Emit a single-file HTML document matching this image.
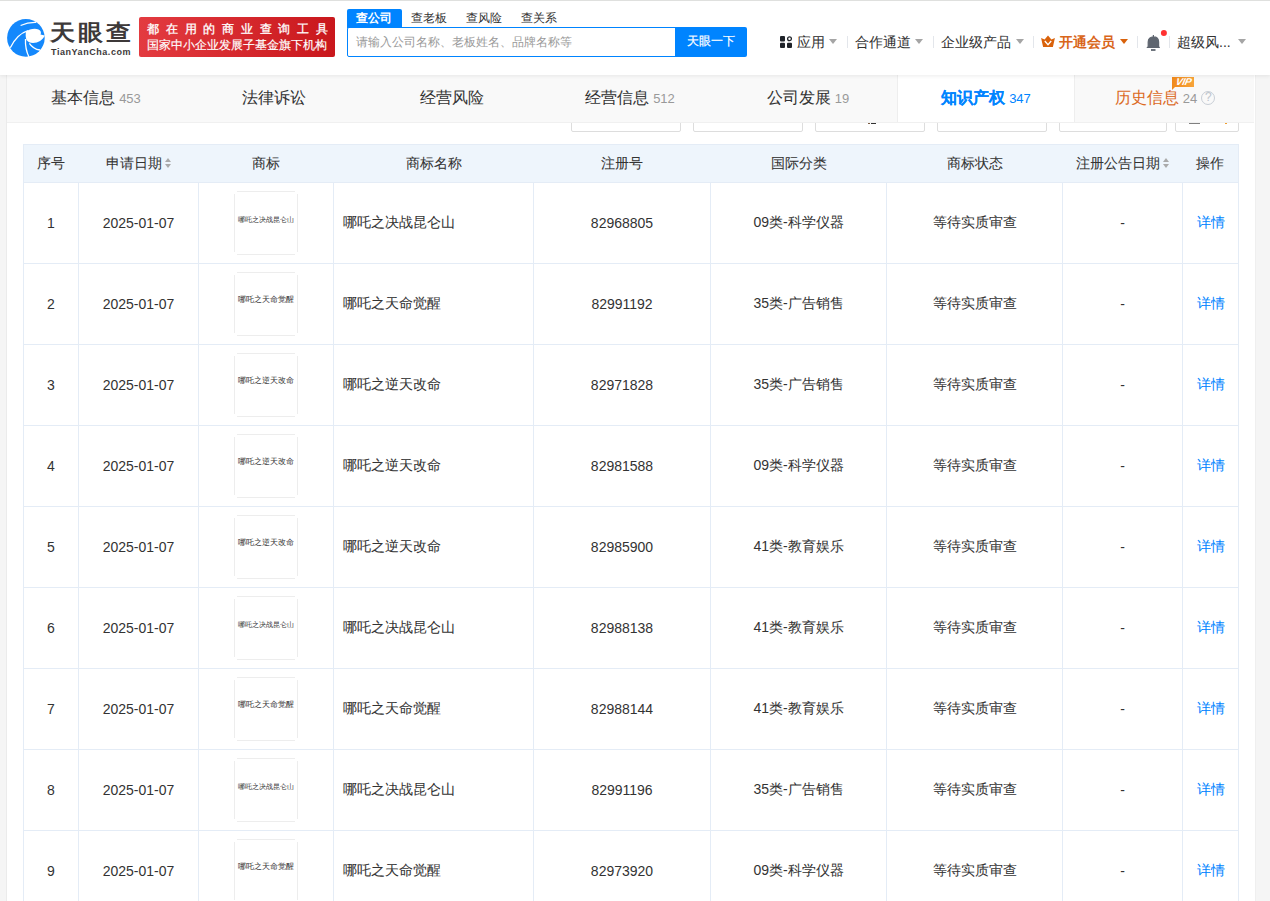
<!DOCTYPE html>
<html><head><meta charset="utf-8">
<style>
*{box-sizing:border-box;margin:0;padding:0}
html,body{width:1270px;height:901px;overflow:hidden;background:#f5f5f5;font-family:"Liberation Sans",sans-serif;color:#333}
.topline{position:absolute;left:0;top:0;width:1270px;height:1px;background:#dfe0de;z-index:10}
.header{position:absolute;left:0;top:0;width:1270px;height:75px;background:#fff;z-index:5;box-shadow:0 1px 4px rgba(0,0,0,.08)}
.abs{position:absolute}
.car{position:absolute;top:39px;width:0;height:0;border-left:4px solid transparent;border-right:4px solid transparent;border-top:5px solid #a5a5a5}
.sep{position:absolute;top:36px;width:1px;height:12px;background:#e3e6eb}
.container{position:absolute;left:6px;top:75px;width:1250px;height:826px;background:#fff;border-left:1px solid #ebebeb;border-right:1px solid #efefef}
.tabbar{position:absolute;left:7px;top:75px;width:1247px;height:48px;background:#f9f9f9;z-index:4;border-bottom:1px solid #f0f0f0}
.tab{position:absolute;top:0;height:47px;line-height:45px;text-align:center;font-size:16px;color:#333;white-space:nowrap;-webkit-text-stroke:0.05px currentColor}
.tab .n{font-size:13px;color:#999;margin-left:4px;-webkit-text-stroke:0}
.tab.active{background:#fff;border-left:1px solid #eee;border-right:1px solid #eee;color:#0084ff;font-weight:bold}
.tab.active .n{color:#0084ff;font-weight:normal}
.q{display:inline-block;width:14px;height:14px;border:1.5px solid #c8ced6;border-radius:50%;font-style:normal;font-size:12px;line-height:11px;color:#c0c6ce;text-align:center;vertical-align:middle;margin-left:4px;position:relative;top:-1px}
.vip{position:absolute;left:1165px;top:2px;width:22px;height:10px;background:linear-gradient(90deg,#f08a1c,#f7a43a);color:#fff;font-size:10px;font-weight:bold;font-style:italic;line-height:10px;text-align:center;letter-spacing:-0.3px}
.vip b{display:inline-block;transform:skewX(-12deg);margin-left:2px}
.vip:after{content:"";position:absolute;left:0;top:10px;border-top:3px solid #f08a1c;border-right:3px solid transparent}
.fbox{position:absolute;top:100px;height:32px;border:1px solid #ddd;border-radius:2px;background:#fff}
table{position:absolute;left:23px;top:144px;border-collapse:collapse;table-layout:fixed;font-size:14px;color:#333}
th{background:#eef5fc;height:38px;font-weight:normal;border-top:1px solid #e4ecf6;border-bottom:1px solid #e4ecf6;text-align:center;white-space:nowrap}
th:first-child{border-left:1px solid #e4ecf6}
th:last-child{border-right:1px solid #e4ecf6}
td{height:81px;border:1px solid #e4ecf6;text-align:center;white-space:nowrap}
.c{-webkit-text-stroke:0.05px currentColor}
td.l{text-align:left;padding-left:9px}
td a{color:#0084ff;text-decoration:none}
.tm{display:inline-block;width:64px;height:64px;vertical-align:middle;position:relative;font-family:"Liberation Serif",serif;background:linear-gradient(#ededed,#ededed) 3px 0/58px 1px no-repeat,linear-gradient(#ededed,#ededed) 3px 63px/58px 1px no-repeat,linear-gradient(#ededed,#ededed) 0 3px/1px 58px no-repeat,linear-gradient(#ededed,#ededed) 63px 3px/1px 58px no-repeat}
.tm span{position:absolute;left:0;right:0;top:25px;font-size:6.8px;text-align:center;color:#333;line-height:8px}
.tm span.b{top:23px;font-size:8px;line-height:9px}
.sort{display:inline-block;width:7px;height:10px;position:relative;vertical-align:middle;margin-left:3px;top:-1px}
.sort:before{content:"";position:absolute;left:0;top:0;border-left:3.5px solid transparent;border-right:3.5px solid transparent;border-bottom:4px solid #aaa}
.sort:after{content:"";position:absolute;left:0;top:6px;border-left:3.5px solid transparent;border-right:3.5px solid transparent;border-top:4px solid #aaa}
</style></head><body>
<div class="topline"></div>
<div class="header">
  <!-- logo -->
  <svg class="abs" style="left:4px;top:16px" width="44" height="44" viewBox="0 0 44 44"><circle cx="21.9" cy="21.9" r="18.8" fill="#1488fc"/><path d="M22,16 C25,13 31,12 34.5,13.5 C37,14.5 37.5,17 36.5,18.5 L40.8,19.5 C39,24 34,27 29,27 C26,27 24,26 22.5,24 C21.5,21 21.5,18 22,16 Z" fill="#fff"/><g fill="none" stroke="#fff" stroke-width="1.3"><path d="M6.3,31.7 Q13,18 24,14.6"/><path d="M21.5,23 Q21,33 25,41"/><path d="M25.4,27.3 Q29,33 36,34"/><path d="M16.6,9.5 Q24,6 32.2,6.3"/></g></svg>
  <div class="abs" style="left:50px;top:18px;font-size:25px;font-weight:bold;color:#3d3939;letter-spacing:3px;transform:scaleY(0.88);transform-origin:0 4px">天眼查</div>
  <div class="abs" style="left:51px;top:47px;font-size:9px;font-weight:bold;color:#3d3939;letter-spacing:0.55px">TianYanCha.com</div>
  <!-- banner -->
  <div class="abs" style="left:139px;top:17px;width:196px;height:40px;border-radius:2px;background:linear-gradient(90deg,#e33b40,#c9171c)"></div>
  <div class="abs" style="left:147px;top:21px;font-size:12px;color:#fff;letter-spacing:6.75px;line-height:16px;-webkit-text-stroke:0.3px #fff">都在用的商业查询工具</div>
  <div class="abs" style="left:147px;top:37px;font-size:12px;color:#fff;line-height:16px;-webkit-text-stroke:0.15px #fff">国家中小企业发展子基金旗下机构</div>
  <!-- search -->
  <div class="abs" style="left:347px;top:9px;width:55px;height:19px;background:#0084ff;border-radius:2px 2px 0 0"></div>
  <div class="abs" style="left:356px;top:9px;font-size:12px;line-height:19px;color:#fff;font-weight:bold">查公司</div>
  <div class="abs" style="left:411px;top:9px;font-size:12px;line-height:19px;color:#333">查老板</div>
  <div class="abs" style="left:466px;top:9px;font-size:12px;line-height:19px;color:#333">查风险</div>
  <div class="abs" style="left:521px;top:9px;font-size:12px;line-height:19px;color:#333">查关系</div>
  <div class="abs" style="left:347px;top:27px;width:330px;height:30px;border:1px solid #0084ff;border-radius:2px 0 0 2px;background:#fff"></div>
  <div class="abs" style="left:356px;top:27px;font-size:12px;line-height:30px;color:#999">请输入公司名称、老板姓名、品牌名称等</div>
  <div class="abs" style="left:675px;top:27px;width:72px;height:30px;background:#0084ff;border-radius:0 2px 2px 0;color:#fff;font-size:12px;line-height:29px;text-align:center;-webkit-text-stroke:0.2px #fff">天眼一下</div>
  <!-- nav -->
  <svg class="abs" style="left:780px;top:36px" width="12" height="12" viewBox="0 0 12 12"><rect x="0" y="0" width="5" height="5.5" rx="1" fill="#1f2329"/><circle cx="9.5" cy="2.7" r="1.9" fill="none" stroke="#1f2329" stroke-width="1.3"/><rect x="0" y="6.8" width="5" height="5.2" rx="1" fill="#1f2329"/><rect x="7" y="6.8" width="5" height="5.2" rx="1" fill="#1f2329"/></svg>
  <i class="car" style="left:829px"></i><i class="sep" style="left:847px"></i>
  <i class="car" style="left:915px"></i><i class="sep" style="left:933px"></i>
  <i class="car" style="left:1016px"></i><i class="sep" style="left:1033px"></i>
  <svg class="abs" style="left:1036px;top:30px" width="30" height="22" viewBox="0 0 30 22"><path d="M5.1,8.1 L8.6,9.4 L12,5.4 L15.4,9.4 L18.9,8.1 L16.9,16.9 L7.1,16.9 Z" fill="#d9620b"/><path d="M8.8,11 L12,14.6 L15.2,11" fill="none" stroke="#fff" stroke-width="1.4"/></svg>
  <i class="car" style="left:1120px;border-top-color:#d9620b"></i><i class="sep" style="left:1137px"></i>
  <svg class="abs" style="left:1140px;top:26px" width="35" height="28" viewBox="0 0 35 28"><path d="M13.4,9 L13.4,11 M8.2,21.3 L8.2,16 C8.2,12.8 10.5,10.9 13.4,10.9 C16.3,10.9 18.6,12.8 18.6,16 L18.6,21.3" fill="#5f6670" stroke="#5f6670" stroke-width="1.2"/><rect x="6.7" y="20.8" width="13.2" height="1.2" rx=".5" fill="#5f6670"/><rect x="11" y="23.1" width="4.5" height="1.8" fill="#5f6670"/><circle cx="23.9" cy="7" r="3" fill="#ff3131"/></svg>
  <i class="sep" style="left:1169px"></i>
  <i class="car" style="left:1238px"></i>
  <div class="abs" style="left:797px;top:32px;font-size:14px;line-height:20px;color:#333;-webkit-text-stroke:0.05px #333">应用</div>
  <div class="abs" style="left:855px;top:32px;font-size:14px;line-height:20px;color:#333;-webkit-text-stroke:0.05px #333">合作通道</div>
  <div class="abs" style="left:941px;top:32px;font-size:14px;line-height:20px;color:#333;-webkit-text-stroke:0.05px #333">企业级产品</div>
  <div class="abs" style="left:1059px;top:32px;font-size:14px;line-height:20px;color:#d9661b;font-weight:bold">开通会员</div>
  <div class="abs" style="left:1177px;top:32px;font-size:14px;line-height:20px;color:#333;-webkit-text-stroke:0.05px #333">超级风...</div>
</div>
<div class="container"></div>
<div class="fbox" style="left:571px;width:110px"></div>
<div class="fbox" style="left:693px;width:110px"></div>
<div class="fbox" style="left:815px;width:110px"></div>
<div class="fbox" style="left:937px;width:110px"></div>
<div class="fbox" style="left:1059px;width:108px"></div>
<div class="fbox" style="left:1175px;width:64px"></div>
<div class="abs" style="left:1189px;top:121px;width:11px;height:3px;border:1px solid #808080;border-top:0;z-index:3"></div>
<div class="abs" style="left:1225px;top:122px;width:2px;height:2px;background:#f0a030;z-index:3"></div>
<div class="abs" style="left:868px;top:122px;width:2px;height:2px;background:#7a5a40;z-index:3"></div>
<div class="abs" style="left:871px;top:122px;width:5px;height:2px;background:#333;z-index:3"></div>
<div class="tabbar">
  <div class="tab" style="left:0;width:178px">基本信息<span class="n">453</span></div>
  <div class="tab" style="left:178px;width:178px">法律诉讼</div>
  <div class="tab" style="left:356px;width:178px">经营风险</div>
  <div class="tab" style="left:534px;width:178px">经营信息<span class="n">512</span></div>
  <div class="tab" style="left:712px;width:178px">公司发展<span class="n">19</span></div>
  <div class="tab active" style="left:890px;width:178px">知识产权<span class="n">347</span></div>
  <div class="tab" style="left:1068px;width:180px;color:#dc6a1f">历史信息<span class="n">24</span><i class="q">?</i></div>
  <div class="vip"><b>VIP</b></div>
</div>
<table>
<colgroup><col style="width:55px"><col style="width:120px"><col style="width:135px"><col style="width:200px"><col style="width:177px"><col style="width:176px"><col style="width:176px"><col style="width:120px"><col style="width:56px"></colgroup>
<thead><tr class="c"><th>序号</th><th>申请日期<i class="sort"></i></th><th>商标</th><th>商标名称</th><th>注册号</th><th>国际分类</th><th>商标状态</th><th>注册公告日期<i class="sort"></i></th><th>操作</th></tr></thead>
<tbody id="tb">
<tr><td>1</td><td>2025-01-07</td><td><div class="tm"><span>哪吒之决战昆仑山</span></div></td><td class="l c">哪吒之决战昆仑山</td><td>82968805</td><td>09<span class="c">类</span>-<span class="c">科学仪器</span></td><td class="c">等待实质审查</td><td>-</td><td class="c"><a>详情</a></td></tr>
<tr><td>2</td><td>2025-01-07</td><td><div class="tm"><span class="b">哪吒之天命觉醒</span></div></td><td class="l c">哪吒之天命觉醒</td><td>82991192</td><td>35<span class="c">类</span>-<span class="c">广告销售</span></td><td class="c">等待实质审查</td><td>-</td><td class="c"><a>详情</a></td></tr>
<tr><td>3</td><td>2025-01-07</td><td><div class="tm"><span class="b">哪吒之逆天改命</span></div></td><td class="l c">哪吒之逆天改命</td><td>82971828</td><td>35<span class="c">类</span>-<span class="c">广告销售</span></td><td class="c">等待实质审查</td><td>-</td><td class="c"><a>详情</a></td></tr>
<tr><td>4</td><td>2025-01-07</td><td><div class="tm"><span class="b">哪吒之逆天改命</span></div></td><td class="l c">哪吒之逆天改命</td><td>82981588</td><td>09<span class="c">类</span>-<span class="c">科学仪器</span></td><td class="c">等待实质审查</td><td>-</td><td class="c"><a>详情</a></td></tr>
<tr><td>5</td><td>2025-01-07</td><td><div class="tm"><span class="b">哪吒之逆天改命</span></div></td><td class="l c">哪吒之逆天改命</td><td>82985900</td><td>41<span class="c">类</span>-<span class="c">教育娱乐</span></td><td class="c">等待实质审查</td><td>-</td><td class="c"><a>详情</a></td></tr>
<tr><td>6</td><td>2025-01-07</td><td><div class="tm"><span>哪吒之决战昆仑山</span></div></td><td class="l c">哪吒之决战昆仑山</td><td>82988138</td><td>41<span class="c">类</span>-<span class="c">教育娱乐</span></td><td class="c">等待实质审查</td><td>-</td><td class="c"><a>详情</a></td></tr>
<tr><td>7</td><td>2025-01-07</td><td><div class="tm"><span class="b">哪吒之天命觉醒</span></div></td><td class="l c">哪吒之天命觉醒</td><td>82988144</td><td>41<span class="c">类</span>-<span class="c">教育娱乐</span></td><td class="c">等待实质审查</td><td>-</td><td class="c"><a>详情</a></td></tr>
<tr><td>8</td><td>2025-01-07</td><td><div class="tm"><span>哪吒之决战昆仑山</span></div></td><td class="l c">哪吒之决战昆仑山</td><td>82991196</td><td>35<span class="c">类</span>-<span class="c">广告销售</span></td><td class="c">等待实质审查</td><td>-</td><td class="c"><a>详情</a></td></tr>
<tr><td>9</td><td>2025-01-07</td><td><div class="tm"><span class="b">哪吒之天命觉醒</span></div></td><td class="l c">哪吒之天命觉醒</td><td>82973920</td><td>09<span class="c">类</span>-<span class="c">科学仪器</span></td><td class="c">等待实质审查</td><td>-</td><td class="c"><a>详情</a></td></tr>
</tbody></table>
</body></html>
